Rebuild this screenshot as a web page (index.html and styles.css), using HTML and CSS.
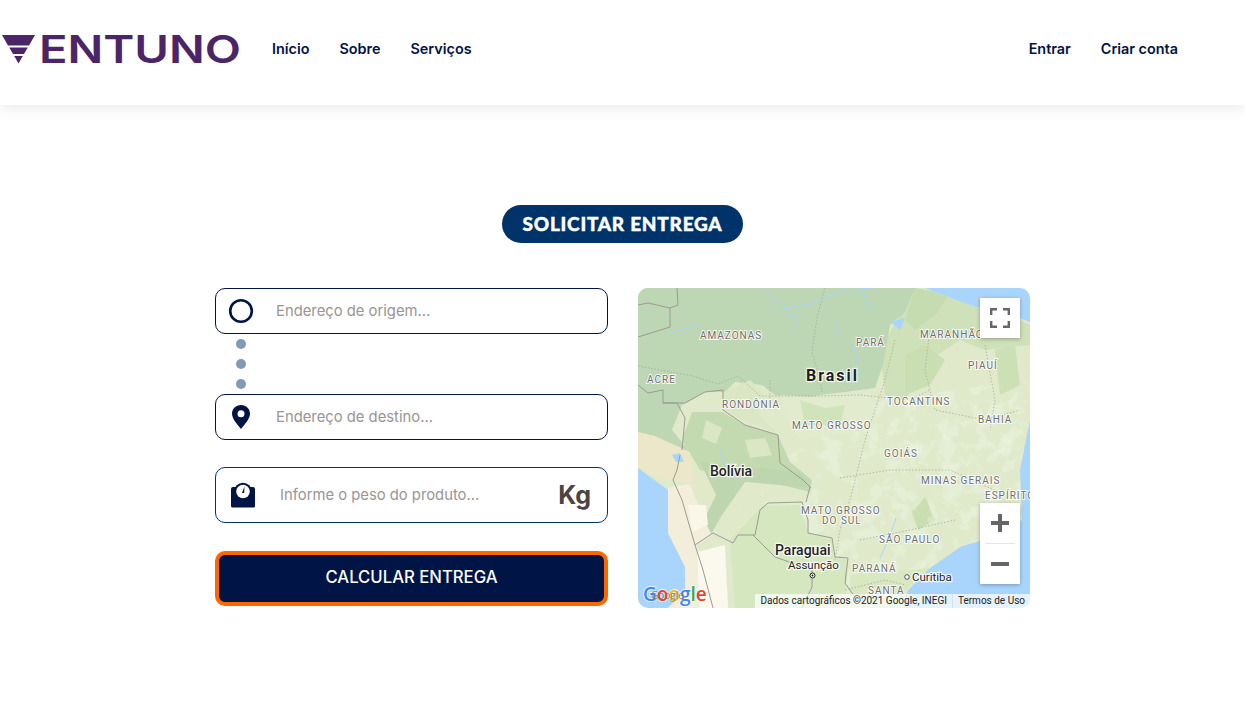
FILE: index.html
```html
<!DOCTYPE html>
<html lang="pt-BR">
<head>
  <meta charset="UTF-8" />
  <title>Ventuno - Solicitar entrega</title>
  <link rel="stylesheet" href="styles.css">
</head>
<body>
  <header class="topbar">
    <a class="logo" href="#">
      <svg width="242" height="32" viewBox="0 0 242 32">
        <polygon points="2,0 35,0 29,10.500 8,10.500" fill="#4b2568"/>
        <polygon points="9.200,12.500 27.800,12.500 24,19 13,19" fill="#4b2568"/>
        <polygon points="14.200,21 22.800,21 18.500,28.500" fill="#4b2568"/>
        <text x="39" y="28.200" textLength="202" lengthAdjust="spacingAndGlyphs" class="logo-text">ENTUNO</text>
      </svg>
    </a>
    <nav class="nav">
      <a href="#">Início</a>
      <a href="#">Sobre</a>
      <a href="#">Serviços</a>
    </nav>
    <nav class="nav nav-right">
      <a href="#">Entrar</a>
      <a href="#">Criar conta</a>
    </nav>
  </header>

  <main class="content">
    <h1 class="pill">SOLICITAR ENTREGA</h1>

    <div class="columns">
      <form class="form">
        <label class="field">
          <svg class="icon" width="26" height="26" viewBox="0 0 26 26"><circle cx="13" cy="13" r="10.800" fill="none" stroke="#001446" stroke-width="2.600"/></svg>
          <input type="text" placeholder="Endereço de origem...">
        </label>
        <div class="dots"><span></span><span></span><span></span></div>
        <label class="field">
          <svg class="icon" width="26" height="26" viewBox="0 0 26 26"><path fill-rule="evenodd" d="M13 1c5 0 9 3.800 9 8.800 0 4.600-4.600 10-9 15.200C8.600 19.800 4 14.400 4 9.800 4 4.800 8 1 13 1zm0 5.300a3.500 3.500 0 1 0 0 7 3.500 3.500 0 0 0 0-7z" fill="#001446"/></svg>
          <input type="text" placeholder="Endereço de destino...">
        </label>
        <label class="field field-weight">
          <svg class="icon icon-scale" width="26" height="26" viewBox="0 0 26 26">
            <path d="M1 7a2 2 0 0 1 2-2h20a2 2 0 0 1 2 2v17a1.500 1.500 0 0 1-1.500 1.500h-21A1.500 1.500 0 0 1 1 24z" fill="#001446"/>
            <circle cx="13" cy="9.500" r="8.800" fill="#001446"/>
            <circle cx="13" cy="9.500" r="6.800" fill="#fff"/>
            <path d="M14.500 4.500l-.4 6.500h-2.200z" fill="#001446"/>
          </svg>
          <input type="text" placeholder="Informe o peso do produto...">
          <span class="unit">Kg</span>
        </label>
        <button type="button" class="submit">CALCULAR ENTREGA</button>
      </form>

      <div class="map">
        <svg class="map-canvas" width="392" height="320" viewBox="638 288 392 320">
          <defs>
            <filter id="patchA" x="0" y="0" width="100%" height="100%">
              <feTurbulence type="fractalNoise" baseFrequency="0.05" numOctaves="3" seed="7"/>
              <feColorMatrix type="matrix" values="0 0 0 0 0.80  0 0 0 0 0.89  0 0 0 0 0.72  8 0 0 0 -4.200"/>
            </filter>
            <filter id="patchB" x="0" y="0" width="100%" height="100%">
              <feTurbulence type="fractalNoise" baseFrequency="0.07" numOctaves="3" seed="21"/>
              <feColorMatrix type="matrix" values="0 0 0 0 0.86  0 0 0 0 0.91  0 0 0 0 0.77  8 0 0 0 -4.400"/>
            </filter>
            <filter id="soft"><feGaussianBlur stdDeviation="0.600"/></filter>
            <clipPath id="landClip"><path d="M638 288H925L945 296 975 307 1003 312 1030 322V420L1020 470 1022 520 1000 535 962 546 930 568 908 590 903 608H668L685 590 685 567 668 533 668 490 638 468z"/></clipPath>
            <clipPath id="southClip"><path d="M740 485L880 400 1030 380V608H740z"/></clipPath>
          </defs>

          <rect x="638" y="288" width="392" height="320" fill="#a9d5fd"/>
          <g clip-path="url(#landClip)">
            <rect x="638" y="288" width="392" height="320" fill="#e0eacb"/>
            <rect x="638" y="288" width="392" height="320" filter="url(#patchA)" clip-path="url(#southClip)" opacity=".6"/>
            <g filter="url(#soft)">
              <!-- floresta -->
              <polygon fill="#cfe1b8" points="915,288 1000,310 1030,325 1030,345 985,350 960,340 930,360 905,400 885,395 880,350"/>
              <polygon fill="#bdd6b3" points="638,288 915,288 905,312 890,325 886,348 882,368 875,388 845,392 820,395 795,400 775,395 762,385 735,382 725,392 705,392 682,405 672,430 690,452 640,470 638,470"/>
              <polygon fill="#c3dab0" points="682,440 692,412 722,412 745,425 778,435 790,462 812,480 810,492 770,482 735,478 700,470"/>
              <polygon fill="#bdd6b0" points="700,462 760,468 800,472 812,488 790,486 745,482 722,515 710,536 700,528 716,495"/>
              <polygon fill="#dbe7c4" points="723,392 750,380 762,392 758,412 775,432 745,422 725,410"/>
              <polygon fill="#e2ebcd" points="780,395 830,398 870,392 878,420 870,430 800,440 790,425"/>
              <polygon fill="#d0e3bb" points="800,400 825,408 845,405 840,425 805,425"/>
              <polygon fill="#dbe7c4" points="706,420 722,428 716,444 702,438"/>
              <polygon fill="#dbe7c4" points="745,440 765,438 772,455 750,458"/>
              <polygon fill="#c5dcb0" points="915,288 950,294 935,315 915,330 905,320"/>
              <polygon fill="#c9deb1" points="905,355 925,345 945,360 930,385 905,395"/>
              <polygon fill="#cbe0b5" points="995,350 1015,345 1020,385 1000,395"/>
              <polygon fill="#c9deb1" points="912,512 925,497 935,520 918,530"/>
              <!-- Andes e Chaco -->
              <polygon fill="#ece7c8" points="638,432 655,436 690,452 694,482 680,482 660,478 638,468"/>
              <polygon fill="#f3eedb" points="668,488 690,484 704,520 712,535 697,545 716,600 700,608 668,608 685,590 685,567 668,533"/>
              <polygon fill="#faf6e8" points="688,505 706,505 708,525 692,532"/>
              <polygon fill="#fbf8ee" points="697,552 725,545 728,608 700,608"/>
              <polygon fill="#d5e7be" points="730,540 762,506 800,505 808,533 832,540 835,558 848,560 845,608 735,608"/>
              <polygon fill="#d8e8c0" points="850,575 930,568 905,590 903,608 850,608"/>
            </g>
            <rect x="880" y="400" width="150" height="130" filter="url(#patchB)" opacity=".35"/>

            <!-- rios -->
            <g fill="none" stroke="#a9d5fd" stroke-width="1">
              <path d="M765 288l15 22 30-6 35-14 28-2"/>
              <path d="M785 305l15 18"/>
              <path d="M835 320l3 20"/>
              <path d="M870 310l-8-20"/>
              <path d="M853 340l5 30"/>
              <path d="M880 558l10-22 6-18"/>
              <path d="M700 325l-30 8"/>
              <path d="M720 450l5 14"/>
            </g>
            <polygon fill="#a9d5fd" points="890,322 905,318 900,330"/>
            <polygon fill="#a9d5fd" points="672,455 680,453 684,462 676,462"/>

            <!-- divisas dos estados -->
            <g fill="none" stroke="#a8a8a0" stroke-width=".8" stroke-dasharray="1.500 1.800">
              <path d="M638 366l55 10 25 8 20-8 22 20h60l40-1 50 5 20-10"/>
              <path d="M825 288l-8 30-5 34 8 28 2 12"/>
              <path d="M770 380v30"/>
              <path d="M895 340l-10 40-20 60-15 60-10 30-5 30"/>
              <path d="M930 330l-5 40 10 40 50 10 35-10"/>
              <path d="M985 345l10 55-5 30"/>
              <path d="M840 478l50-8 60 0 55 25"/>
              <path d="M860 540l50-10 45-10"/>
              <path d="M845 590l40-10 20 5"/>
            </g>

            <!-- fronteiras -->
            <g fill="none" stroke="#9b9b93" stroke-width="1">
              <path d="M677 288l1 17-8 3v19l-32 10"/>
              <path d="M638 305l10-2 22 5"/>
              <path d="M638 385l10 8 15-3v13h14l8 15-3 32"/>
              <path d="M663 403h22l20-11 18-2v20l22 15 33 10 2 28 23 17 7 7-4 15"/>
              <path d="M802 502l6 18v13l24 5 3 19 13 1-3 25 10 14"/>
              <path d="M802 502l-34 1-8 7-5 25h-17l-5 8-20-10-18 12-13-45-9-20 4-10 3-15"/>
              <path d="M753 535l22 22 37 13v17l-10 21"/>
              <path d="M695 545l8 25 10 38"/>
            </g>
          </g>

          <!-- rotulos -->
          <g class="lbl">
            <text x="700" y="339">AMAZONAS</text>
            <text x="856" y="346">PARÁ</text>
            <text x="920" y="338">MARANHÃO</text>
            <text x="968" y="369">PIAUÍ</text>
            <text x="647" y="383">ACRE</text>
            <text x="722" y="408">RONDÔNIA</text>
            <text x="887" y="405">TOCANTINS</text>
            <text x="978" y="423">BAHIA</text>
            <text x="792" y="429">MATO GROSSO</text>
            <text x="884" y="457">GOIÁS</text>
            <text x="921" y="484">MINAS GERAIS</text>
            <text x="985" y="499">ESPÍRITO</text>
            <text x="801" y="514">MATO GROSSO</text>
            <text x="822" y="524">DO SUL</text>
            <text x="879" y="543">SÃO PAULO</text>
            <text x="852" y="572">PARANÁ</text>
            <text x="868" y="594">SANTA</text>
          </g>
          <g class="lbl-big">
            <text x="806" y="381" class="lbl-country">Brasil</text>
            <text x="710" y="476" class="lbl-bold">Bolívia</text>
            <text x="775" y="555" class="lbl-bold">Paraguai</text>
            <text x="788" y="569" class="lbl-city">Assunção</text>
            <text x="912" y="581" class="lbl-city">Curitiba</text>
          </g>
          <circle cx="812.500" cy="575.500" r="2.500" fill="#fff" stroke="#222" stroke-width="1"/>
          <circle cx="812.500" cy="575.500" r="1" fill="#222"/>
          <circle cx="907" cy="577" r="2.300" fill="#fff" stroke="#333" stroke-width=".8"/>

          <!-- marca -->
          <g class="gmark">
            <text x="643" y="601"><tspan fill="#4285f4">G</tspan><tspan fill="#ea4335">o</tspan><tspan fill="#fbbc05">o</tspan><tspan fill="#4285f4">g</tspan><tspan fill="#34a853">l</tspan><tspan fill="#ea4335">e</tspan></text>
          </g>
          <text x="651" y="599" class="gmark-over">Google</text>
        </svg>

        <button type="button" class="map-btn map-full" aria-label="Tela cheia">
          <svg width="20" height="20" viewBox="-1 -1 20 20"><path d="M0 6V0h6M12 0h6v6M18 12v6h-6M6 18H0v-6" fill="none" stroke="#666" stroke-width="2.800"/></svg>
        </button>
        <div class="map-zoom">
          <button type="button" class="map-btn" aria-label="Mais"><svg width="18" height="18" viewBox="0 0 18 18"><path d="M0 9h18M9 0v18" stroke="#666" stroke-width="4"/></svg></button>
          <i></i>
          <button type="button" class="map-btn" aria-label="Menos"><svg width="18" height="18" viewBox="0 0 18 18"><path d="M0 9h18" stroke="#666" stroke-width="4"/></svg></button>
        </div>
        <div class="map-attr">
          <span>Dados cartográficos ©2021 Google, INEGI</span>
          <span>Termos de Uso</span>
        </div>
      </div>
    </div>
  </main>
</body>
</html>
```

FILE: styles.css
```css
* {
  box-sizing: border-box;
}

html, body {
  height: 100%;
}

body {
  margin: 0;
  background: #fff;
  color: #001446;
  font-family: Inter, Arial, sans-serif;
  overflow: hidden;
}

/* Topo */
.topbar {
  height: 105px;
  display: flex;
  align-items: center;
  background: #fff;
  box-shadow: 0 2px 14px rgba(0,0,0,0.1);
}

.logo {
  display: block;
  width: 272px;
  height: 32px;
  margin-top: -3px;
}

.logo svg {
  overflow: visible;
}

.logo-text {
  font-family: Inter, Arial, sans-serif;
  font-size: 38.500px;
  font-weight: 600;
  fill: #4b2568;
}

.nav {
  display: flex;
  gap: 30px;
  margin-top: -8px;
}

.nav a {
  color: #001446;
  font-size: 14.400px;
  font-weight: 600;
  text-decoration: none;
}

.nav-right {
  margin-left: auto;
  margin-right: 67px;
}

/* Conteudo */
.content {
  display: flex;
  flex-direction: column;
  align-items: center;
  padding-top: 100px;
}

.pill {
  margin: 0 0 45px;
  width: 241px;
  height: 38px;
  border-radius: 19px;
  background: #00336a;
  color: #fff;
  font-family: Lato, Arial, sans-serif;
  font-size: 19px;
  font-weight: 900;
  line-height: 37px;
  letter-spacing: 0.75px;
  text-align: center;
  -webkit-text-stroke: 0.4px #fff;
}

.columns {
  display: flex;
  gap: 30px;
}

.form {
  width: 393px;
  display: flex;
  flex-direction: column;
}

.field {
  height: 46px;
  display: flex;
  align-items: center;
  padding-left: 12px;
  border: 1px solid #001446;
  border-radius: 10px;
}

.field input {
  flex: 1;
  min-width: 0;
  margin-left: 22px;
  padding: 0;
  border: none;
  outline: none;
  background: transparent;
  color: #333;
  font-family: Inter, Arial, sans-serif;
  font-size: 14.800px;
}

.field input::placeholder {
  color: #9a9494;
}

.dots {
  height: 60px;
  display: flex;
  flex-direction: column;
  align-items: flex-start;
  gap: 10px;
  padding: 5px 0 0 21px;
}

.dots span {
  width: 10px;
  height: 10px;
  border-radius: 50%;
  background: #819ab9;
}

.field-weight {
  height: 56px;
  margin-top: 27px;
  border-color: #00336a;
}

.icon-scale {
  margin-left: 2px;
}

.field-weight input {
  margin-left: 24px;
}

.unit {
  margin-right: 16px;
  color: #4a4543;
  font-size: 25px;
  font-weight: 700;
}

.submit {
  height: 55px;
  margin-top: 28px;
  padding: 0 0 4px;
  border: 4px solid #ff6600;
  border-radius: 10px;
  background: #001446;
  color: #fff;
  font-family: Inter, Arial, sans-serif;
  font-size: 16.700px;
  font-weight: 500;
}

/* Mapa */
.map {
  position: relative;
  width: 392px;
  height: 320px;
  border-radius: 10px;
  overflow: hidden;
}

.map-canvas {
  display: block;
}

.lbl text {
  font-family: Roboto, Arial, sans-serif;
  font-size: 10px;
  letter-spacing: 1px;
  fill: #6f6f6f;
  stroke: rgba(255,255,255,0.85);
  stroke-width: 2px;
  paint-order: stroke;
}

.lbl-big text {
  font-family: Roboto, Arial, sans-serif;
  fill: #1f1f1f;
  stroke: rgba(255,255,255,0.85);
  stroke-width: 2.500px;
  paint-order: stroke;
}

.lbl-big .lbl-country {
  font-size: 16px;
  font-weight: 700;
  letter-spacing: 2px;
}

.lbl-big .lbl-bold {
  font-size: 14px;
  font-weight: 500;
}

.lbl-big .lbl-city {
  font-size: 11.500px;
}

.gmark text {
  font-family: "Open Sans", Arial, sans-serif;
  font-size: 19px;
  font-weight: 600;
  stroke: rgba(255,255,255,0.7);
  stroke-width: 2px;
  paint-order: stroke;
}

.gmark-over {
  font-family: "Open Sans", Arial, sans-serif;
  font-size: 10px;
  fill: #77736a;
  opacity: 0.8;
}

.map-btn {
  display: flex;
  align-items: center;
  justify-content: center;
  width: 40px;
  height: 40px;
  padding: 0;
  border: none;
  background: #fff;
}

.map-full {
  position: absolute;
  top: 10px;
  right: 10px;
  box-shadow: 0 1px 4px rgba(0,0,0,0.3);
}

.map-zoom {
  position: absolute;
  top: 215px;
  right: 10px;
  width: 40px;
  background: #fff;
  box-shadow: 0 1px 4px rgba(0,0,0,0.3);
}

.map-zoom i {
  display: block;
  height: 1px;
  margin: 0 5px;
  background: #e6e6e6;
}

.map-attr {
  position: absolute;
  right: 0;
  bottom: 0;
  display: flex;
  height: 14px;
  background: rgba(255,255,255,0.7);
  color: #222;
  font-family: Roboto, Arial, sans-serif;
  font-size: 10px;
  line-height: 14px;
}

.map-attr span {
  padding: 0 5px;
}

.map-attr span + span {
  border-left: 1px solid #d5e3ee;
}
```
